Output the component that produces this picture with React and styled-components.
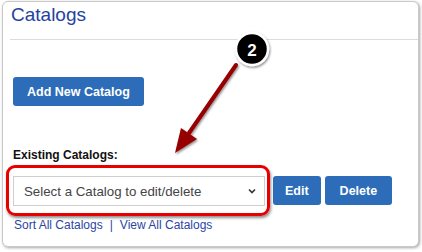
import React from 'react'
import styled, { createGlobalStyle } from 'styled-components';

const GlobalStyle = createGlobalStyle`
  html, body {
    margin: 0;
    padding: 0;
    background: #fff;
    font-family: "Liberation Sans", Arial, sans-serif;
  }
`;

const Page = styled.div`
  position: relative;
  width: 422px;
  height: 252px;
  padding: 1px 0 0 2px;
  box-sizing: border-box;
  overflow: hidden;
`;

const Card = styled.div`
  width: 417px;
  height: 246px;
  box-sizing: border-box;
  border: 1px solid #c9c9c9;
  border-radius: 6px;
  background: #fff;
  box-shadow: 1px 1px 3px rgba(0, 0, 0, 0.35);
`;

const Header = styled.div`
  height: 35px;
  margin-left: 7px;
  padding: 2px 0 0 1px;
  border-bottom: 1px solid #dcdcdc;
`;

const Title = styled.h2`
  margin: 0;
  font-size: 19px;
  font-weight: normal;
  line-height: 22px;
  color: #26429f;
`;

const Body = styled.div`
  padding: 37px 0 0 10px;
  display: flex;
  flex-direction: column;
  align-items: flex-start;
`;

const Button = styled.button`
  height: 29px;
  padding: 0 ${({ px }) => px}px;
  border: none;
  border-radius: 3px;
  background: #2c6cb8;
  color: #fff;
  font-family: "Liberation Sans", Arial, sans-serif;
  font-size: 12.5px;
  font-weight: bold;
  cursor: pointer;
`;

const Label = styled.div`
  margin-top: 42px;
  font-size: 12px;
  font-weight: bold;
  line-height: 14px;
  color: #111;
`;

const Row = styled.div`
  margin-top: 14px;
  display: flex;
  align-items: flex-start;
`;

const SelectWrap = styled.div`
  position: relative;
  margin-right: 8px;

  /* red annotation frame */
  &::after {
    content: '';
    position: absolute;
    top: -11px;
    left: -7px;
    right: -5px;
    bottom: -10px;
    border: 3px solid #e80000;
    border-radius: 9px;
    box-shadow: 1px 2px 3px rgba(0, 0, 0, 0.45);
    pointer-events: none;
  }
`;

const SelectBox = styled.div`
  width: 252px;
  height: 30px;
  box-sizing: border-box;
  padding: 0 8px 0 10px;
  border: 1px solid #cfcfcf;
  background: #fff;
  display: flex;
  align-items: center;
  justify-content: space-between;
  font-size: 13.3px;
  color: #444;
`;

const Actions = styled.div`
  display: flex;
  gap: 4px;
`;

const Links = styled.div`
  margin-top: 12px;
  margin-left: 1px;
  font-size: 12px;
  line-height: 14px;
  color: #2a46a3;
`;

const Link = styled.a`
  color: inherit;
  text-decoration: none;
`;

const Sep = styled.span`
  padding: 0 7px;
  color: #2a46a3;
`;

const Overlay = styled.svg`
  position: absolute;
  top: 0;
  left: 0;
  pointer-events: none;
`;

const Chevron = () => (
  <svg width="8" height="6" viewBox="0 0 8 6">
    <path d="M1 1.5 L4 4.5 L7 1.5" fill="none" stroke="#333" strokeWidth="1.6" />
  </svg>
);

export default function App() {
  return (
    <>
      <GlobalStyle />
      <Page>
        <Card>
          <Header>
            <Title>Catalogs</Title>
          </Header>
          <Body>
            <Button px={14}>Add New Catalog</Button>
            <Label>Existing Catalogs:</Label>
            <Row>
              <SelectWrap>
                <SelectBox>
                  <span>Select a Catalog to edit/delete</span>
                  <Chevron />
                </SelectBox>
              </SelectWrap>
              <Actions>
                <Button px={12}>Edit</Button>
                <Button px={15}>Delete</Button>
              </Actions>
            </Row>
            <Links>
              <Link href="#">Sort All Catalogs</Link>
              <Sep>|</Sep>
              <Link href="#">View All Catalogs</Link>
            </Links>
          </Body>
        </Card>
        <Overlay width="422" height="252" viewBox="0 0 422 252">
          <defs>
            <filter id="sh" x="-50%" y="-50%" width="200%" height="200%">
              <feDropShadow dx="1" dy="1.5" stdDeviation="1.2" floodColor="#000" floodOpacity="0.45" />
            </filter>
          </defs>
          <g filter="url(#sh)">
            <line x1="236" y1="65" x2="189" y2="133" stroke="#960000" strokeWidth="4" strokeLinecap="round" />
            <polygon points="175,153 181,128 197,139" fill="#960000" />
          </g>
          <g filter="url(#sh)">
            <circle cx="252" cy="49" r="16" fill="#000" stroke="#fff" strokeWidth="2.5" />
          </g>
          <text x="252" y="55.5" textAnchor="middle" fill="#fff" fontFamily="Liberation Sans, Arial, sans-serif" fontWeight="bold" fontSize="17">2</text>
        </Overlay>
      </Page>
    </>
  );
}
